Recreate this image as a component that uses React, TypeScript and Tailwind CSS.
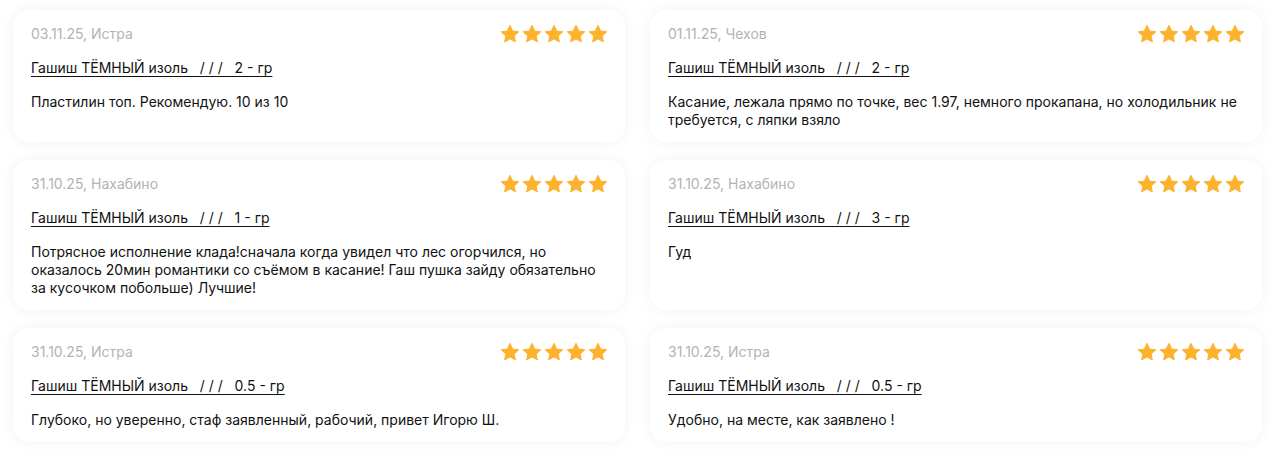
const reviews = [
  {
    date: "03.11.25, Истра",
    item: "Гашиш ТЁМНЫЙ изоль   / / /   2 - гр",
    text: "Пластилин топ. Рекомендую. 10 из 10",
  },
  {
    date: "01.11.25, Чехов",
    item: "Гашиш ТЁМНЫЙ изоль   / / /   2 - гр",
    text: "Касание, лежала прямо по точке, вес 1.97, немного прокапана, но холодильник не требуется, с ляпки взяло",
  },
  {
    date: "31.10.25, Нахабино",
    item: "Гашиш ТЁМНЫЙ изоль   / / /   1 - гр",
    text: "Потрясное исполнение клада!сначала когда увидел что лес огорчился, но оказалось 20мин романтики со съёмом в касание! Гаш пушка зайду обязательно за кусочком побольше) Лучшие!",
  },
  {
    date: "31.10.25, Нахабино",
    item: "Гашиш ТЁМНЫЙ изоль   / / /   3 - гр",
    text: "Гуд",
  },
  {
    date: "31.10.25, Истра",
    item: "Гашиш ТЁМНЫЙ изоль   / / /   0.5 - гр",
    text: "Глубоко, но уверенно, стаф заявленный, рабочий, привет Игорю Ш.",
  },
  {
    date: "31.10.25, Истра",
    item: "Гашиш ТЁМНЫЙ изоль   / / /   0.5 - гр",
    text: "Удобно, на месте, как заявлено !",
  },
];

// ── Star ───────────────────────────────────────────────────────────────────
function Star() {
  return (
    <svg width="20" height="20" viewBox="0 0 24 24" className="shrink-0">
      <path
        d="M12 1.8l3.05 6.6 7.15.85-5.3 4.9 1.42 7.08L12 17.65l-6.32 3.58 1.42-7.08-5.3-4.9 7.15-.85z"
        fill="#FDB22E"
        stroke="#FDB22E"
        strokeWidth="1.4"
        strokeLinejoin="round"
      />
    </svg>
  );
}

// ── Review card ────────────────────────────────────────────────────────────
type Review = (typeof reviews)[number];

function ReviewCard({ data }: { data: Review }) {
  return (
    <div className="flex flex-col rounded-2xl bg-white pt-[14px] pb-[13px] px-[18px] shadow-[0_0_14px_rgba(0,0,0,0.06)]">
      <div className="flex h-5 items-center justify-between">
        <span className="text-[14px] leading-5 text-[#b3b3b3]">{data.date}</span>
        <div className="flex items-center gap-[2px] mr-[-1px]">
          {[0, 1, 2, 3, 4].map((i) => (
            <Star key={i} />
          ))}
        </div>
      </div>
      <div className="mt-[14px] h-[18px] leading-[18px]">
        <span className="whitespace-pre text-[14px] text-[#111] underline decoration-[#111] decoration-1 underline-offset-[3px]">
          {data.item}
        </span>
      </div>
      <p className="mt-[17px] text-[14px] leading-[18px] text-[#111]">{data.text}</p>
    </div>
  );
}

export default function App() {
  return (
    <div
      className="min-h-screen bg-white pt-[10px] pl-[13px] pr-[18px]"
      style={{ fontFamily: "Inter, 'Noto Sans', sans-serif" }}
    >
      <div className="grid grid-cols-2 gap-x-[25px] gap-y-[18px]">
        {reviews.map((r, i) => (
          <ReviewCard key={i} data={r} />
        ))}
      </div>
    </div>
  );
}
